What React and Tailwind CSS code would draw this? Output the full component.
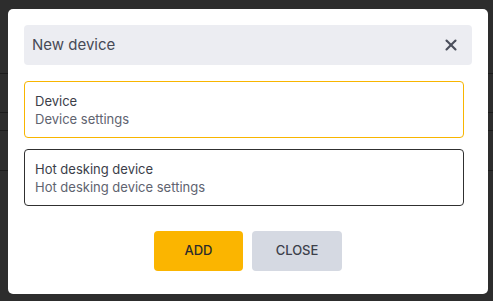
import { X } from "lucide-react";

const options = [
  { title: "Device", subtitle: "Device settings", active: true },
  { title: "Hot desking device", subtitle: "Hot desking device settings", active: false },
];

function OptionCard({ title, subtitle, active }) {
  return (
    <button
      className={`flex w-full flex-col items-start rounded-[4px] border bg-white px-[10px] pt-[10px] pb-[9px] text-left ${
        active ? "border-[#f8b500]" : "border-[#303030]"
      }`}
    >
      <span className="text-[13px] leading-[18px] text-[#3b3e49]">{title}</span>
      <span className="text-[13px] leading-[18px] text-[#60636f]">{subtitle}</span>
    </button>
  );
}

function Backdrop() {
  // the page behind the dialog, only its row dividers show through
  return (
    <div className="absolute inset-0 flex flex-col bg-[#2d2d2d]">
      <div className="h-[74px] border-b border-[#1c1c1c]" />
      <div className="h-[39px] border-b border-[#1c1c1c]" />
      <div className="h-[18px] border-b border-[#1c1c1c]" />
      <div className="h-[40px] border-b border-[#1c1c1c]" />
    </div>
  );
}

export default function App() {
  return (
    <div
      className="relative h-[301px] w-[493px] overflow-hidden"
      style={{ fontFamily: "Inter, 'Noto Sans', sans-serif" }}
    >
      <Backdrop />
      <div className="relative pl-2 pt-[9px]">
        <div className="flex h-[285px] w-[480px] flex-col rounded-[5px] bg-white px-4 pt-4">
          <div className="flex h-[40px] items-center justify-between rounded-[4px] bg-[#ecedf2] pl-[8px] pr-[12px]">
            <span className="text-[15px] text-[#474a56]">New device</span>
            <X className="h-[18px] w-[18px] text-[#4b4f5c]" strokeWidth={2.8} />
          </div>

          <div className="mt-[16px] flex w-[440px] flex-col gap-[11px]">
            {options.map((o) => (
              <OptionCard key={o.title} {...o} />
            ))}
          </div>

          <div className="mt-[25px] flex justify-center gap-[9px]">
            <button className="h-[40px] w-[89px] rounded-[4px] bg-[#fbb500] text-[13px] font-medium text-[#2b2b2b]">
              ADD
            </button>
            <button className="h-[40px] w-[90px] rounded-[4px] bg-[#d5d9e2] text-[13px] font-medium text-[#3c3f4a]">
              CLOSE
            </button>
          </div>
        </div>
      </div>
    </div>
  );
}
